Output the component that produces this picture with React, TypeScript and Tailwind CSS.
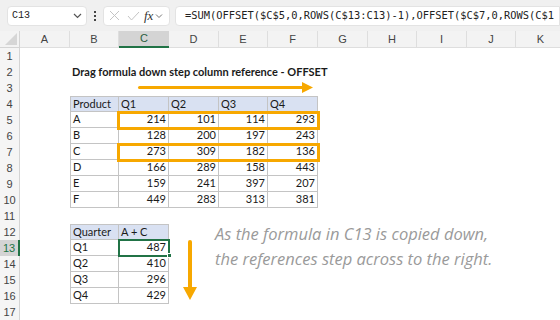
import React from 'react';

const COLS = ['A', 'B', 'C', 'D', 'E', 'F', 'G', 'H', 'I', 'J', 'K'];
const ROWS = Array.from({ length: 17 }, (_, i) => i + 1);

const sheet: Record<string, string> = {
  B2: 'Drag formula down step column reference - OFFSET',
  B4: 'Product', C4: 'Q1', D4: 'Q2', E4: 'Q3', F4: 'Q4',
  B5: 'A', C5: '214', D5: '101', E5: '114', F5: '293',
  B6: 'B', C6: '128', D6: '200', E6: '197', F6: '243',
  B7: 'C', C7: '273', D7: '309', E7: '182', F7: '136',
  B8: 'D', C8: '166', D8: '289', E8: '158', F8: '443',
  B9: 'E', C9: '159', D9: '241', E9: '397', F9: '207',
  B10: 'F', C10: '449', D10: '283', E10: '313', F10: '381',
  B12: 'Quarter', C12: 'A + C',
  B13: 'Q1', C13: '487',
  B14: 'Q2', C14: '410',
  B15: 'Q3', C15: '296',
  B16: 'Q4', C16: '429',
};

function inTable(r: number, c: number) {
  if (r >= 4 && r <= 10 && c >= 1 && c <= 5) return { top: r === 4, head: r === 4 };
  if (r >= 12 && r <= 16 && c >= 1 && c <= 2) return { top: r === 12, head: r === 12 };
  return null;
}

function Cell({ r, c }: { r: number; c: number }) {
  const key = COLS[c] + r;
  const value = sheet[key];
  const t = inTable(r, c);
  const isTitle = key === 'B2';
  const numeric = value !== undefined && /^\d+$/.test(value);

  let cls = 'flex items-center px-[2px] text-[11px] text-[#1a1a1a] whitespace-nowrap';
  if (t) {
    cls += ' border-r border-b border-[#c4c4c4]';
    if (t.top) cls += ' border-t';
    if (c === 1) cls += ' border-l';
    if (t.head) cls += ' bg-[#d9e1f2]';
  }
  if (numeric) cls += ' justify-end';
  if (isTitle) cls += ' font-bold overflow-visible';

  return <div className={cls}>{value}</div>;
}

export default function App() {
  return (
    <div
      className="relative w-[560px] h-[320px] overflow-hidden bg-white"
      style={{ fontFamily: 'Lato, "Liberation Sans", sans-serif' }}
    >
      {/* formula bar */}
      <div className="flex items-center h-[31px] bg-[#f0f0f0] pl-[7px] gap-[5px]">
        <div className="flex items-center justify-between w-[80px] h-[20px] bg-white rounded-[4px] border border-[#e3e3e3] pl-[4px] pr-[4px]">
          <span className="text-[10px] text-[#222]" style={{ fontFamily: '"Liberation Mono", monospace' }}>C13</span>
          <svg width="9" height="6" viewBox="0 0 9 6"><path d="M1 1l3.5 3.5L8 1" fill="none" stroke="#555" strokeWidth="1.2" /></svg>
        </div>
        <div className="flex flex-col gap-[2px] mx-[2px]">
          <span className="w-[2px] h-[2px] bg-[#444]" />
          <span className="w-[2px] h-[2px] bg-[#444]" />
          <span className="w-[2px] h-[2px] bg-[#444]" />
        </div>
        <div className="flex items-center w-[67px] h-[20px] bg-white rounded-[4px] border border-[#e3e3e3] pl-[5px] gap-[7px]">
          <svg width="11" height="11" viewBox="0 0 11 11"><path d="M1 1l9 9M10 1l-9 9" stroke="#c4c4c4" strokeWidth="1" /></svg>
          <svg width="13" height="10" viewBox="0 0 13 10"><path d="M1 5l3.5 4L12 1" fill="none" stroke="#c4c4c4" strokeWidth="1" /></svg>
          <span className="flex items-center -ml-[3px]">
            <span className="italic text-[13px] text-[#333] leading-none" style={{ fontFamily: '"Liberation Serif", serif' }}>fx</span>
            <svg width="8" height="6" viewBox="0 0 8 6" className="ml-[2px]"><path d="M1 1.5l3 3 3-3" fill="none" stroke="#777" strokeWidth="1" /></svg>
          </span>
        </div>
        <div className="flex-1 flex items-center h-[20px] bg-white rounded-l-[4px] border border-[#e3e3e3] pl-[9px] overflow-hidden whitespace-nowrap">
          <span className="text-[10.4px] text-[#222]" style={{ fontFamily: '"DejaVu Sans Mono", monospace' }}>
            =SUM(OFFSET($C$5,0,ROWS(C$13:C13)-1),OFFSET($C$7,0,ROWS(C$1
          </span>
        </div>
      </div>

      {/* sheet grid */}
      <div className="grid grid-cols-[20px_50px_49px_50px_50px_49px_50px_50px_49px_50px_49px_50px] grid-rows-[17px_repeat(17,16px)] w-[566px]">
        <div className="relative bg-[#f3f3f3] border-r border-b border-[#d4d4d4]">
          <svg width="12" height="12" viewBox="0 0 12 12" className="absolute right-[2px] bottom-[2px]"><path d="M12 0V12H0Z" fill="#d6d6d6" /></svg>
        </div>
        {COLS.map((col, i) =>
          i === 2 ? (
            <div key={col} className="flex items-center justify-center bg-[#d4d4d4] border-b-2 border-[#217346] text-[11px] text-[#2b5e3f]" style={{ fontFamily: '"Liberation Sans", sans-serif' }}>
              {col}
            </div>
          ) : (
            <div key={col} className="flex items-center justify-center bg-[#f3f3f3] border-r border-b border-[#dedede] text-[11px] text-[#444]" style={{ fontFamily: '"Liberation Sans", sans-serif' }}>
              {col}
            </div>
          )
        )}
        {ROWS.map((r) => (
          <React.Fragment key={r}>
            {r === 13 ? (
              <div className="flex items-center justify-center bg-[#d4d4d4] border-r-2 border-[#217346] text-[11px] text-[#217346]" style={{ fontFamily: '"Liberation Sans", sans-serif' }}>
                {r}
              </div>
            ) : (
              <div className="flex items-center justify-center bg-[#f5f5f5] border-r border-[#d4d4d4] text-[11px] text-[#444]" style={{ fontFamily: '"Liberation Sans", sans-serif' }}>
                {r}
              </div>
            )}
            {COLS.map((_, c) => (
              <Cell key={c} r={r} c={c} />
            ))}
          </React.Fragment>
        ))}
      </div>

      {/* orange highlight boxes */}
      <div className="absolute left-[117px] top-[111px] w-[203px] h-[19px] border-[3px] border-[#f7a800]" />
      <div className="absolute left-[117px] top-[143px] w-[203px] h-[19px] border-[3px] border-[#f7a800]" />

      {/* active cell */}
      <div className="absolute left-[118px] top-[239px] w-[52px] h-[18px] border-2 border-[#217346]" />
      <div className="absolute left-[167px] top-[253px] w-[5px] h-[5px] bg-[#217346] border border-white" />

      {/* arrows */}
      <svg className="absolute left-[136px] top-[80px]" width="180" height="15" viewBox="0 0 180 15">
        <rect x="2" y="6" width="166" height="3" rx="1.5" fill="#f7a800" />
        <path d="M166 2L177 7.5L166 13Z" fill="#f7a800" />
      </svg>
      <svg className="absolute left-[182px] top-[239px]" width="16" height="62" viewBox="0 0 16 62">
        <rect x="6" y="1" width="4" height="50" rx="2" fill="#f7a800" />
        <path d="M1 48H15L8 61Z" fill="#f7a800" />
      </svg>

      {/* note */}
      <div
        className="absolute left-[215px] top-[221px] text-[16.5px] leading-[25px] text-[#9a9a9a] italic whitespace-nowrap"
        style={{ fontFamily: '"Open Sans", sans-serif' }}
      >
        <div>As the formula in C13 is copied down,</div>
        <div>the references step across to the right.</div>
      </div>
    </div>
  );
}
